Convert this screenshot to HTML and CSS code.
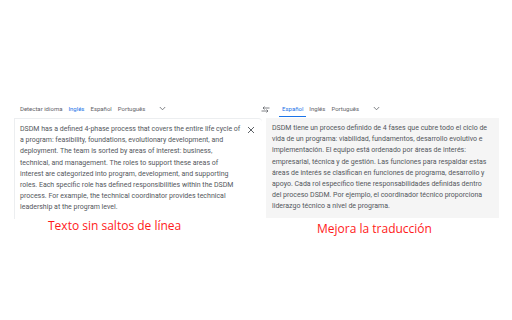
FILE: index.html
```html
<!DOCTYPE html>
<html>
<head>
    <meta charset="UTF-8">
    <title>Traductor</title>
    <link rel="stylesheet" href="styles.css">
</head>
<body>
    <div class="page">
        <!-- source side -->
        <div class="col col-left">
            <div class="tabs">
                <span class="tab">Detectar idioma</span>
                <span class="tab active">Inglés</span>
                <span class="tab">Español</span>
                <span class="tab">Português</span>
                <svg class="chevron" width="7" height="5" viewBox="0 0 7 5"><path d="M0.8 1 L3.5 3.8 L6.2 1" fill="none" stroke="#5f6368" stroke-width="0.8"/></svg>
            </div>
            <div class="panel panel-source">
                <p class="text">DSDM has a defined 4-phase process that covers the entire life cycle of<br>a program: feasibility, foundations, evolutionary development, and<br>deployment. The team is sorted by areas of interest: business,<br>technical, and management. The roles to support these areas of<br>interest are categorized into program, development, and supporting<br>roles. Each specific role has defined responsibilities within the DSDM<br>process. For example, the technical coordinator provides technical<br>leadership at the program level.</p>
                <svg class="close" width="8" height="8" viewBox="0 0 8 8"><path d="M1 1 L7 7 M7 1 L1 7" stroke="#5f6368" stroke-width="1"/></svg>
            </div>
            <div class="caption caption-left">Texto sin saltos de línea</div>
        </div>
        <!-- target side -->
        <div class="col col-right">
            <div class="tabs">
                <svg class="swap" width="9" height="7" viewBox="0 0 9 7"><path d="M0.5 5 H7 M5.5 3.5 L7 5 L5.5 6.5 M8.5 2 H2 M3.5 0.5 L2 2 L3.5 3.5" fill="none" stroke="#5f6368" stroke-width="0.8"/></svg>
                <span class="tab active">Español</span>
                <span class="tab">Inglés</span>
                <span class="tab">Português</span>
                <svg class="chevron" width="7" height="5" viewBox="0 0 7 5"><path d="M0.8 1 L3.5 3.8 L6.2 1" fill="none" stroke="#5f6368" stroke-width="0.8"/></svg>
            </div>
            <div class="panel panel-target">
                <p class="text">DSDM tiene un proceso definido de 4 fases que cubre todo el ciclo de vida de un programa: viabilidad, fundamentos, desarrollo evolutivo e implementación. El equipo está ordenado por áreas de interés: empresarial, técnica y de gestión. Las funciones para respaldar estas áreas de interés se clasifican en funciones de programa, desarrollo y apoyo. Cada rol específico tiene responsabilidades definidas dentro del proceso DSDM. Por ejemplo, el coordinador técnico proporciona liderazgo técnico a nivel de programa.</p>
            </div>
            <div class="caption caption-right">Mejora la traducción</div>
        </div>
    </div>
</body>
</html>
```

FILE: styles.css
```css
body {
    margin: 0;
    background-color: #ffffff;
    font-family: Roboto, "Liberation Sans", sans-serif;
}

.page {
    display: flex;
    padding: 101px 0 0 14px;
}

.col-left {
    width: 248px;
}

.col-right {
    width: 241px;
    margin-left: -4px;
}

.tabs {
    display: flex;
    align-items: center;
    height: 15px;
    font-size: 6px;
    color: #5f6368;
}

.col-left .tabs {
    padding-left: 6px;
}

.tab {
    position: relative;
    margin-right: 6px;
    line-height: 15px;
}

.tab.active {
    color: #1a73e8;
}

.col-right .tab.active::after {
    content: "";
    position: absolute;
    left: -3px;
    right: -3px;
    bottom: -1px;
    height: 1px;
    background-color: #1a73e8;
}

.chevron {
    margin-left: 8px;
}

.swap {
    margin: 2px 12px 0 3px;
}

.panel {
    position: relative;
    height: 100px;
    margin-top: 2px;
}

.panel-source {
    border-top: 1px solid #eceef0;
    border-left: 1px solid #eceef0;
    border-top-right-radius: 4px;
}

.panel-target {
    margin-left: 8px;
    background-color: #f5f5f5;
}

.text {
    margin: 0;
    font-size: 7px;
    line-height: 11.2px;
    color: #53575c;
}

.panel-source .text {
    padding: 5px 10px 0 5px;
    white-space: nowrap;
}

.panel-target .text {
    padding: 5px 8px 0 6px;
}

.close {
    position: absolute;
    top: 7px;
    right: 7px;
}

.caption {
    font-family: "Open Sans", "Liberation Sans", sans-serif;
    font-size: 12px;
    color: #ff1a1a;
}

.caption-left {
    padding: 0 0 0 34px;
    margin-top: -2px;
}

.caption-right {
    padding: 2px 0 0 59px;
}
```
